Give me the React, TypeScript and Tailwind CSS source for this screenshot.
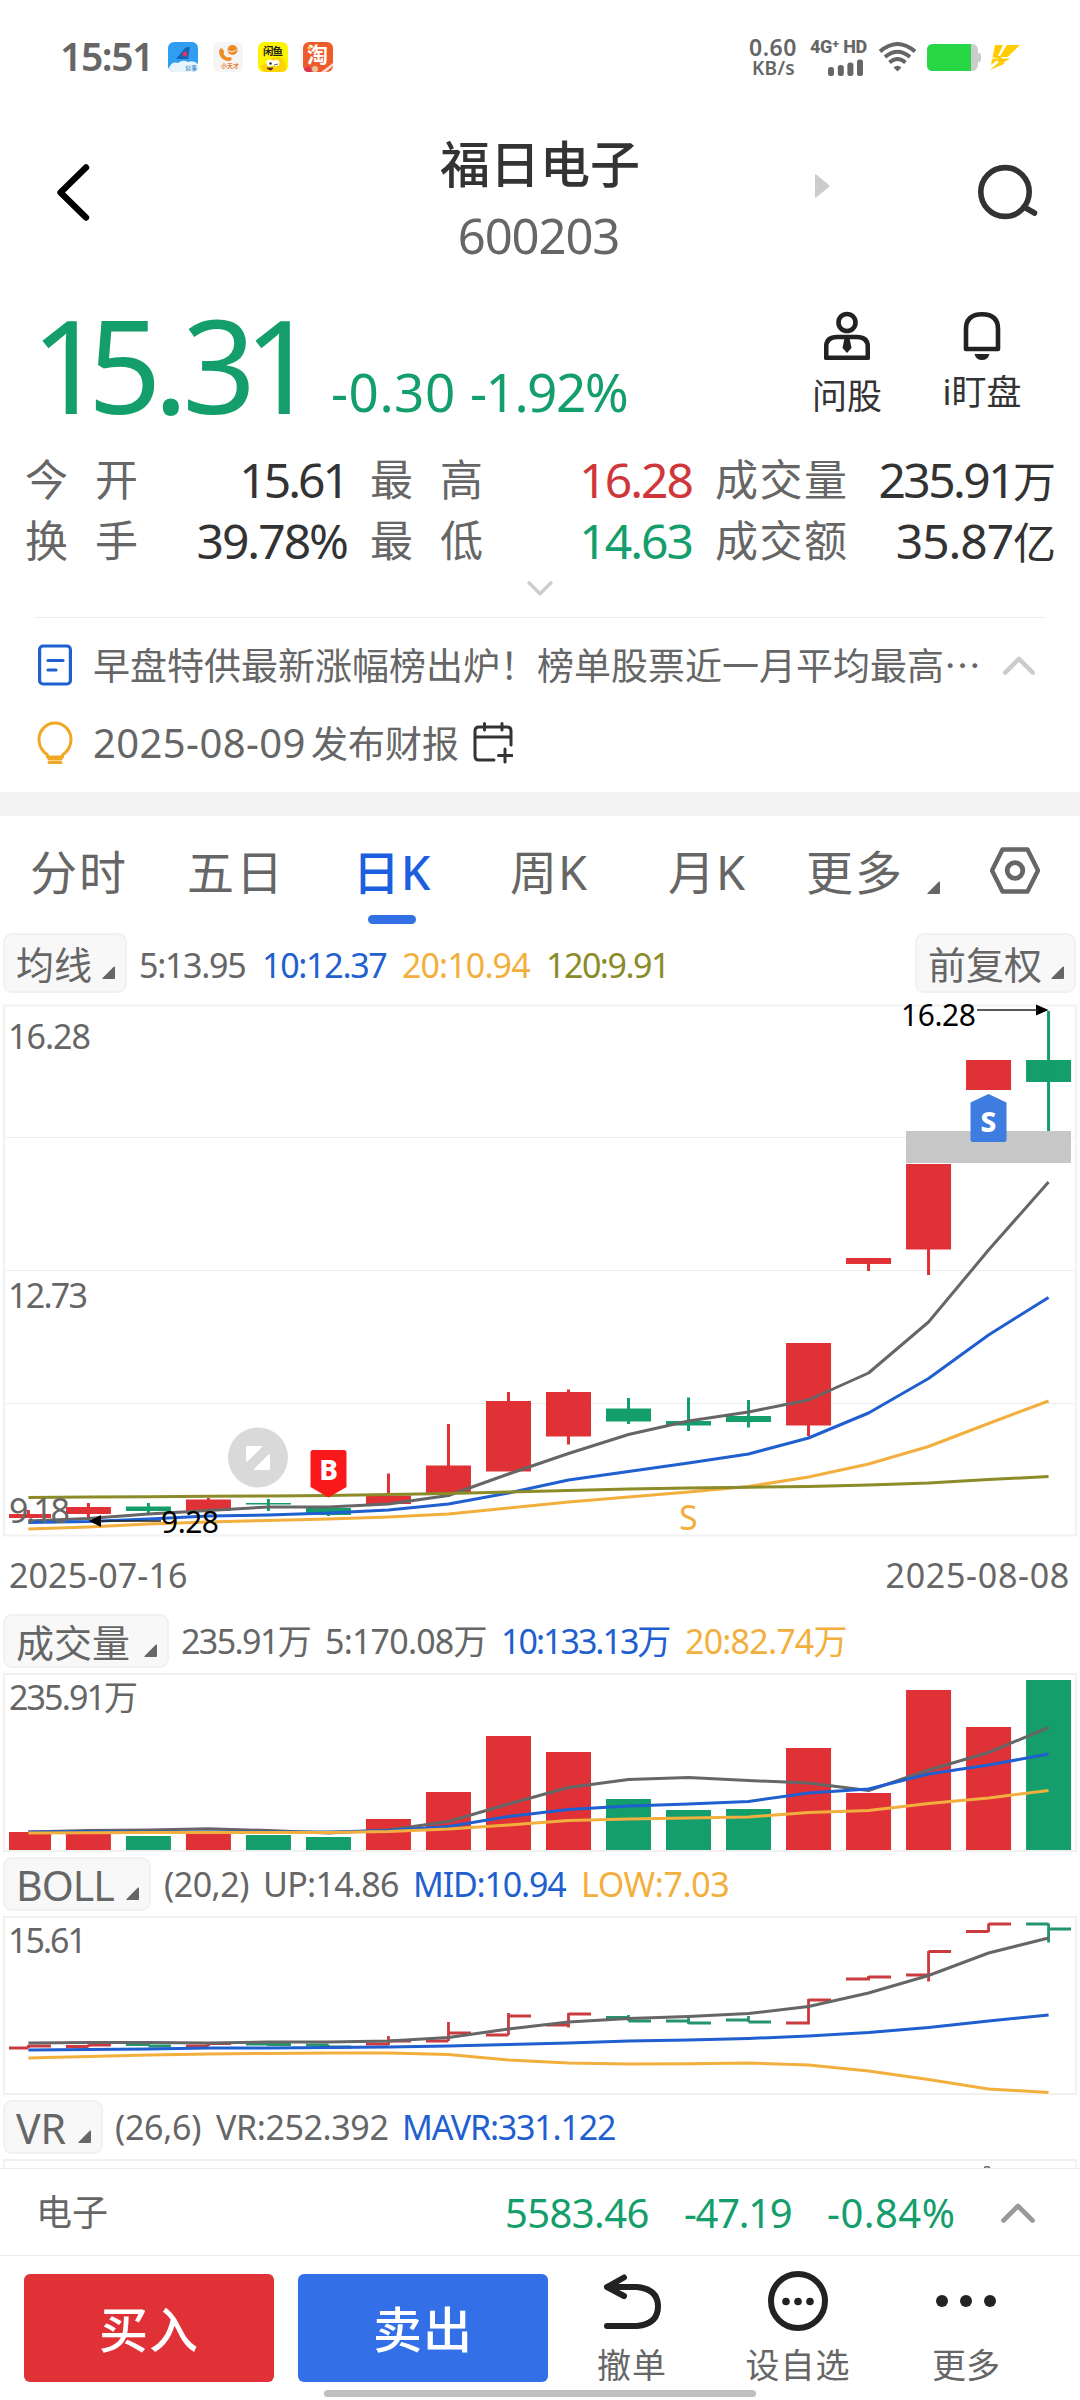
import React from "react";

const RED = "#df3136";
const GREEN = "#139e6b";
const GRAY = "#666666";
const BLUE = "#1f5fd0";
const ORANGE = "#f3af3d";
const OLIVE = "#8b8b2a";

const STEP = 60.01;
const cx = (i: number) => 28.4 + STEP * i;

type Candle = { up: boolean; top: number; bottom: number; high: number; low: number };

const candles: Candle[] = [
  { up: true, top: 1514, bottom: 1518, high: 1510, low: 1518 },
  { up: true, top: 1507, bottom: 1514, high: 1503, low: 1520 },
  { up: false, top: 1506.5, bottom: 1511, high: 1503, low: 1513 },
  { up: true, top: 1499.5, bottom: 1511, high: 1498, low: 1511 },
  { up: false, top: 1503, bottom: 1504.5, high: 1499, low: 1511 },
  { up: false, top: 1508, bottom: 1515, high: 1508, low: 1516 },
  { up: true, top: 1495.5, bottom: 1504, high: 1473.5, low: 1504 },
  { up: true, top: 1465.5, bottom: 1493, high: 1424, low: 1493 },
  { up: true, top: 1401, bottom: 1471.5, high: 1392, low: 1471 },
  { up: true, top: 1392, bottom: 1436.5, high: 1389.5, low: 1444.5 },
  { up: false, top: 1408.5, bottom: 1421.5, high: 1398, low: 1424 },
  { up: false, top: 1421, bottom: 1425.5, high: 1397.5, low: 1431 },
  { up: false, top: 1416, bottom: 1422, high: 1400, low: 1427.5 },
  { up: true, top: 1343, bottom: 1425.5, high: 1343, low: 1436 },
  { up: true, top: 1258, bottom: 1264, high: 1258, low: 1271 },
  { up: true, top: 1164, bottom: 1249.5, high: 1164, low: 1275 },
  { up: true, top: 1060, bottom: 1090, high: 1060, low: 1090 },
  { up: false, top: 1060, bottom: 1082, high: 1011, low: 1131 },
];

const ma5 = [1521, 1518.5, 1514, 1510.5, 1507, 1507, 1504, 1495.5, 1474, 1453.5, 1434.5, 1421, 1412, 1400, 1373, 1322, 1250, 1182];
const ma10 = [1522.5, 1521.5, 1519, 1516, 1515, 1513, 1510, 1504, 1493, 1480, 1471.5, 1463, 1454, 1438, 1413, 1378.5, 1335, 1297.5];
const ma20 = [1529, 1527, 1524, 1522, 1520.5, 1519, 1517, 1514, 1508, 1502, 1497, 1492, 1486.5, 1477, 1464, 1446.5, 1423.5, 1401];
const ma120 = [1497.5, 1497, 1496.8, 1496.3, 1496, 1495.5, 1494.5, 1493.5, 1492, 1490.5, 1489, 1488, 1487.3, 1486.5, 1485, 1483, 1479.5, 1476.5];

const volumes = [1832, 1830, 1836, 1834, 1835, 1837, 1819, 1792, 1736, 1752, 1799, 1810, 1809, 1748, 1793, 1690, 1727, 1680];
const vol5 = [1832, 1830.5, 1830, 1828.7, 1830.5, 1833, 1830, 1821.5, 1804, 1787.5, 1779.5, 1777.5, 1780.5, 1783, 1790.5, 1770, 1752.5, 1727.5];
const vol10 = [1832, 1831.5, 1832, 1832, 1832, 1832, 1830.5, 1826.5, 1816.5, 1809.5, 1806, 1804, 1801.5, 1793, 1789, 1774, 1765, 1754];
const vol20 = [1833, 1832.7, 1832.5, 1832.5, 1832.5, 1832.5, 1831.5, 1829, 1825, 1820.5, 1819, 1818, 1817, 1812.5, 1810.5, 1803.5, 1798, 1790.5];

// open, close, high, low
const bars: number[][] = [
  [2048, 2046, 2045, 2048],
  [2046.5, 2045, 2044.5, 2047],
  [2044.5, 2046, 2044, 2046],
  [2046, 2043.5, 2043, 2046],
  [2044, 2044.5, 2043, 2046],
  [2045, 2047, 2045, 2047],
  [2044, 2041, 2036, 2045],
  [2041, 2033, 2022, 2041],
  [2035, 2016, 2013, 2035],
  [2025, 2014, 2013, 2027.5],
  [2017.5, 2021, 2015, 2021],
  [2021, 2023, 2017, 2024],
  [2020, 2022, 2016, 2022],
  [2023, 2000, 1999, 2024.5],
  [1979, 1977, 1976, 1980.5],
  [1975, 1951.5, 1951, 1981.5],
  [1931.5, 1924, 1923.5, 1932],
  [1924, 1929, 1923.5, 1942.5],
];
const bollUp = [2043, 2042.5, 2042.5, 2043, 2042, 2042, 2041, 2037.5, 2029, 2022, 2018.5, 2016.5, 2013.5, 2006.5, 1993, 1975.5, 1953, 1938];
const bollMid = [2050, 2049.5, 2049, 2048, 2048, 2047.5, 2047, 2046, 2044.5, 2043, 2041, 2040, 2038.5, 2036, 2032.5, 2027.5, 2021, 2015];
const bollLow = [2058, 2056.5, 2055, 2054, 2053.5, 2053, 2053, 2054.5, 2060, 2063, 2064, 2063.7, 2063, 2065, 2071, 2079.5, 2089, 2092.5];

const Curve = ({ ys, color }: { ys: number[]; color: string }) => (
  <polyline
    points={ys.map((y, i) => `${cx(i)},${y}`).join(" ")}
    fill="none"
    stroke={color}
    strokeWidth="3"
    strokeLinejoin="round"
  />
);

const Corner = ({ className = "" }: { className?: string }) => (
  <svg className={`h-[13px] w-[13px] shrink-0 ${className}`} viewBox="0 0 13 13">
    <path d="M12 0.5Q13 0 13 1.5V12Q13 13 12 13H1.2Q-0.4 13 0.6 12Z" fill="#666" />
  </svg>
);

const Pill = ({ label, className = "" }: { label: string; className?: string }) => (
  <div
    className={`flex shrink-0 items-center justify-between rounded-[9px] border-2 border-[#f1f1f1] bg-[#f8f8f8] pl-[11px] pr-[10px] whitespace-nowrap ${className}`}
  >
    <span className="mt-[2px]">{label}</span>
    <Corner className="mt-[19px]" />
  </div>
);

const Chevron = ({ up, color, className = "" }: { up?: boolean; color: string; className?: string }) => (
  <svg className={className} viewBox="0 0 34 20" fill="none" stroke={color} strokeWidth="4.6" strokeLinecap="round" strokeLinejoin="round">
    <path d={up ? "M2.5 17.5L17 3L31.5 17.5" : "M2.5 2.5L17 17L31.5 2.5"} />
  </svg>
);

const StatusBar = () => (
  <div className="flex h-[114px] items-center pl-[60px] text-[#666]">
    <span className="mb-[3px] w-[108px] text-[39px] font-semibold tracking-[-1.400px]">15:51</span>
    <div className="flex gap-[15px]">
      <svg className="h-[30px] w-[30px]" viewBox="0 0 30 30">
        <rect width="30" height="30" rx="6" fill="#2f9df0" />
        <path d="M1 26Q4 19 10 21Q15 17 20 20Q26 18 30 22V25Q29 30 24 30H6Q1 30 1 26Z" fill="#e8f5fd" />
        <path d="M8 17L17 6Q18 5 22 5L20 17Z" fill="#1565b4" />
        <circle cx="17" cy="12" r="2.4" fill="#e2345c" />
        <text x="17" y="28" fontSize="6" fill="#3d8ec8" fontWeight="700">公事</text>
      </svg>
      <svg className="h-[30px] w-[30px]" viewBox="0 0 30 30">
        <rect width="30" height="30" rx="6" fill="#f5f5f5" />
        <circle cx="19.5" cy="8" r="5" fill="#f08a24" />
        <path d="M14.500 8.500Q19 11.500 23.500 7.500" fill="none" stroke="#f5f5f5" />
        <path d="M7 7Q8 5 10.500 8Q12 10 10.500 11.500Q12 15 15 15.500Q18 14 19 17Q18 19.500 14.500 19Q6 17 6 9Z" fill="#f08a24" />
        <text x="8" y="26" fontSize="6" fill="#e8792a" fontWeight="700">小天才</text>
      </svg>
      <svg className="h-[30px] w-[30px]" viewBox="0 0 30 30">
        <rect width="30" height="30" rx="6" fill="#fdf404" />
        <path d="M2 24L7 22Q11 16 18 15Q27 14 28 24V28Q26 30 24 30H6Z" fill="#fdd303" />
        <circle cx="12" cy="21" r="3.600" fill="#fff" />
        <circle cx="18" cy="21" r="3.300" fill="#fff" />
        <circle cx="12.500" cy="21.500" r="1.300" fill="#333" />
        <path d="M16 23L20 22M9 26Q13 30 15 26Z" fill="#8c1f16" stroke="#333" strokeWidth="0.800" />
        <text x="5" y="13" fontSize="10.500" fill="#222" fontWeight="700" textLength="20">闲鱼</text>
      </svg>
      <svg className="h-[30px] w-[30px] overflow-visible" viewBox="0 0 30 30">
        <rect width="30" height="30" rx="6" fill="#ef5b2c" />
        <text x="4" y="20" fontSize="21" fill="#fff" fontWeight="700">淘</text>
        <circle cx="6" cy="6" r="1.800" fill="#ffc93a" />
        <path d="M1 27L6 24L9 30H5Q2 30 1 27Z" fill="#d8325a" />
        <circle cx="12" cy="27" r="3" fill="#e9c3a0" />
        <path d="M18 30L30 21V24L23 30Z" fill="#f7d9d2" />
      </svg>
    </div>
    <div className="ml-[416px] flex w-[61px] flex-col items-start font-semibold">
      <span className="text-[23px] tracking-[0.500px]">0.60</span>
      <span className="pl-[3px] text-[19px] tracking-[0.300px]">KB/s</span>
    </div>
    <div className="flex w-[69px] flex-col gap-[3px]">
      <span className="font-['Roboto'] text-[18px] font-extrabold tracking-[-0.3px] whitespace-nowrap">4G⁺ HD</span>
      <svg className="ml-[18px] h-[17px] w-[36px]" viewBox="0 0 36 17" fill="#666">
        <rect x="0" y="8" width="6" height="9" rx="2.500" />
        <rect x="9.800" y="6" width="6" height="11" rx="2.500" />
        <rect x="19.400" y="3.500" width="6" height="13.500" rx="2.500" />
        <rect x="29" y="0.500" width="6" height="16.500" rx="2.500" />
      </svg>
    </div>
    <svg className="h-[30px] w-[37px]" viewBox="0 0 37 30" fill="none" stroke="#666" strokeWidth="3.900">
      <path d="M1 9.500Q18.500 -5.500 36 9.500" />
      <path d="M6 15Q18.500 4.500 31 15" />
      <path d="M10.500 20.500Q18.500 13.500 26.500 20.500" />
      <path d="M14.500 25.500Q18.500 22 22.500 25.500L18.500 29.500Z" fill="#666" stroke="none" />
    </svg>
    <svg className="ml-[11px] h-[27px] w-[54px]" viewBox="0 0 54 27">
      <rect width="51" height="27" rx="6" fill="#ccc" />
      <rect x="49" y="9" width="5" height="9" rx="2.500" fill="#ccc" />
      <path d="M6 0H44V27H6Q0 27 0 21V6Q0 0 6 0Z" fill="#28d745" />
    </svg>
    <svg className="ml-[9px] h-[25px] w-[30px]" viewBox="0 0 30 25" fill="#fc0">
      <path d="M5 0H13L8 11H10L17 0H30L17.500 12H11L12 13.500L20 13.500L13 18L15 18.500L0 25L9 17L7 16.500L9 14L1 20L2 14L9 13L2.500 12.500Z" />
    </svg>
  </div>
);

const Header = () => (
  <div className="flex h-[156px]">
    <div className="w-[400px] pt-[49px] pl-[56px]">
      <svg className="h-[60px] w-[34px]" viewBox="0 0 34 60" fill="none" stroke="#000" strokeWidth="6.400" strokeLinecap="round" strokeLinejoin="round">
        <path d="M30 4.500L4.500 29.500L30 54.500" />
      </svg>
    </div>
    <div className="flex w-[280px] flex-col items-center gap-[22px] pt-[25px]">
      <h1 className="text-[50px] font-medium text-[#333]">福日电子</h1>
      <p className="pr-[3px] text-[49px] tracking-[-1.100px] text-[#666]">600203</p>
    </div>
    <svg className="mt-[60px] ml-[135px] h-[24px] w-[15px]" viewBox="0 0 15 24" fill="#ccc">
      <path d="M0 1.500Q0 -0.500 1.500 0.800L14 11Q15 12 14 13L1.500 23.200Q0 24.500 0 22.500Z" />
    </svg>
    <svg className="mt-[50px] ml-[147px] h-[56px] w-[62px]" viewBox="0 0 62 56" fill="none" stroke="#333" strokeWidth="5.600" strokeLinecap="round">
      <ellipse cx="28" cy="28" rx="24.200" ry="24.400" />
      <path d="M47 43L57.500 49" />
    </svg>
  </div>
);

const Price = () => (
  <div className="flex h-[179px] items-start text-[#139e6b]">
    <span className="mt-[30px] ml-[31px] w-[300px] text-[129px] whitespace-nowrap">
      <span className="tracking-[-17px]">1</span>
      <span className="tracking-[-8px]">5</span>
      <span className="tracking-[-6px]">.</span>
      <span className="tracking-[-12px]">3</span>
      <span>1</span>
    </span>
    <span className="mt-[95px] w-[139px] text-[53px] tracking-[0.500px]">-0.30</span>
    <span className="mt-[95px] w-[335px] text-[53px] tracking-[-1.500px]">-1.92%</span>
    <div className="mt-[40px] flex w-[84px] flex-col items-center gap-[18px] text-[#333]">
      <svg className="h-[50px] w-[46px]" viewBox="0 0 46 50" fill="none" stroke="#222" strokeWidth="4.600">
        <circle cx="23" cy="12.500" r="8.500" />
        <path d="M2.200 47.800V37Q2.200 27 13 27H33Q43.800 27 43.800 37V47.800Z" strokeLinejoin="round" />
        <path d="M20.500 28H25.500L27.500 38L23 43L18.500 38Z" fill="#222" stroke="none" />
      </svg>
      <span className="text-[35px] whitespace-nowrap">问股</span>
    </div>
    <div className="mt-[40px] ml-[51px] flex w-[84px] flex-col items-center gap-[14px] text-[#333]">
      <svg className="h-[50px] w-[38px]" viewBox="0 0 38 50" fill="none" stroke="#222" strokeWidth="4.600" strokeLinejoin="round">
        <path d="M3 39V19Q3 4.200 19 4.200T35 19V39Z" />
        <path d="M11.500 44H26.500Q25 50 19 50T11.500 44Z" fill="#222" stroke="none" />
      </svg>
      <span className="text-[35px] whitespace-nowrap">i盯盘</span>
    </div>
  </div>
);

const stats = [
  [
    { label: "今开", value: "15.61", color: "text-[#333]", track: "tracking-[-3px]" },
    { label: "最高", value: "16.28", color: "text-[#cf373b]", track: "tracking-[-2px]" },
    { label: "成交量", value: "235.91", unit: "万", color: "text-[#333]", track: "tracking-[-2.600px]" },
  ],
  [
    { label: "换手", value: "39.78%", color: "text-[#333]", track: "tracking-[-2px]" },
    { label: "最低", value: "14.63", color: "text-[#139e6b]", track: "tracking-[-2px]" },
    { label: "成交额", value: "35.87", unit: "亿", color: "text-[#333]", track: "tracking-[-1.100px]" },
  ],
];

const Stats = () => (
  <div className="flex flex-col">
    {stats.map((row, r) => (
      <div key={r} className="grid h-[61px] grid-cols-[322px_322px_341px] items-center gap-x-[23px] pl-[25px] text-[43px]">
        {row.map((s) => (
          <div key={s.label} className="flex items-center justify-between whitespace-nowrap">
            <span className={s.label.length === 2 ? "tracking-[27px] text-[#666]" : "tracking-[1.500px] text-[#666]"}>{s.label}</span>
            <span className={s.color}>
              <span className={`text-[48px] ${s.track}`}>{s.value}</span>
              {s.unit}
            </span>
          </div>
        ))}
      </div>
    ))}
  </div>
);

const News = () => (
  <div className="flex flex-col text-[#666]">
    <div className="mx-[35px] h-px bg-[#ececec]" />
    <div className="flex h-[94px] items-center pl-[38px]">
      <svg className="h-[42px] w-[34px]" viewBox="0 0 34 42" fill="none" stroke="#1f5fd0" strokeWidth="3.200" strokeLinecap="round">
        <rect x="1.600" y="2" width="30.800" height="38" rx="3.500" />
        <path d="M10 16.500H25M10 26H18" />
      </svg>
      <span className="ml-[21px] w-[909px] text-[37px] whitespace-nowrap">早盘特供最新涨幅榜出炉！榜单股票近一月平均最高⋯</span>
      <Chevron up color="#ccc" className="h-[19px] w-[34px]" />
    </div>
    <div className="flex h-[62px] items-center pl-[37px]">
      <svg className="h-[44px] w-[36px]" viewBox="0 0 36 44" fill="none" stroke="#f0a724" strokeWidth="3" strokeLinecap="round">
        <path d="M10.500 36V34Q2 28 2 18.500A16 16.500 0 0 1 34 18.500Q34 28 25.500 34V36Z" strokeLinejoin="round" />
        <path d="M12 41.500H24M12 38H24" />
      </svg>
      <span className="ml-[20px] w-[218px] text-[40px] tracking-[0.400px]">2025-08-09</span>
      <span className="text-[37px]">发布财报</span>
      <svg className="ml-[14px] h-[42px] w-[40px]" viewBox="0 0 40 42" fill="none" stroke="#333" strokeWidth="3" strokeLinecap="round">
        <path d="M38 23V9Q38 5 34 5H6Q2 5 2 9V34Q2 38 6 38H21M2 15H38M11.500 1.500V8M29 1.500V8M32 27V40M25.500 33.500H39" />
      </svg>
    </div>
    <div className="mt-[18px] h-[24px] bg-[#f4f4f4]" />
  </div>
);

const tabs = [
  { name: "分时", width: "w-[157px]" },
  { name: "五日", width: "w-[165px]" },
  { name: "日K", width: "w-[158px]" },
  { name: "周K", width: "w-[158px]" },
  { name: "月K", width: "w-[138px]" },
  { name: "更多", width: "w-[121px]" },
];

const Tabs = () => (
  <div className="flex h-[117px] items-start pl-[30px] text-[47px] text-[#666]">
    {tabs.map((tab) => (
      <div key={tab.name} className={`pt-[33px] whitespace-nowrap ${tab.width}`}>
        {tab.name === "日K" ? (
          <div className="flex w-[80px] flex-col items-center font-medium text-[#1b5fdf]">
            <span className="tracking-[1px]">{tab.name}</span>
            <div className="mt-[19px] h-[9px] w-[48px] rounded-full bg-[#3370e5]" />
          </div>
        ) : (
          <span className={tab.name.endsWith("K") ? "tracking-[1px]" : "tracking-[2px]"}>{tab.name}</span>
        )}
      </div>
    ))}
    <Corner className="mt-[65px]" />
    <svg className="mt-[31px] ml-[50px] h-[47px] w-[50px]" viewBox="0 0 50 47" fill="none" stroke="#666" strokeWidth="4.400" strokeLinejoin="round">
      <path d="M12.500 2.500H37.500L48 23.500L37.500 44.500H12.500L2 23.500Z" />
      <circle cx="25" cy="23.500" r="7.800" strokeWidth="4.800" />
    </svg>
  </div>
);

const MainChart = () => (
  <svg className="block h-[534px] w-[1080px] overflow-visible" viewBox="0 1004 1080 534" fill={GRAY}>
    <rect x="4" y="1005.500" width="1072" height="530" fill="none" stroke="#f1f1f1" strokeWidth="2" />
    {[1137.500, 1270.500, 1403.500].map((y) => (
      <path key={y} d={`M6 ${y}H1074`} stroke="#ececec" />
    ))}
    <rect x="906" y="1131" width="165" height="32" fill="#c7c7c7" />
    {candles.map((c, i) => (
      <g key={i} fill={c.up ? RED : GREEN}>
        <rect x={i === 0 ? 9 : cx(i) - 22.500} y={c.top} width={i === 0 ? 42 : 45} height={c.bottom - c.top} />
        <rect x={cx(i) - 1.500} y={c.high} width="3" height={c.low - c.high} />
      </g>
    ))}
    <Curve ys={ma5} color={GRAY} />
    <Curve ys={ma10} color={BLUE} />
    <Curve ys={ma20} color={ORANGE} />
    <Curve ys={ma120} color={OLIVE} />
    <g fontSize="34">
      <text x="8" y="1049" textLength="83">16.28</text>
      <text x="8" y="1308" textLength="80">12.73</text>
      <text x="9" y="1523" textLength="61">9.18</text>
    </g>
    <g fill="#000" fontSize="30">
      <text x="161" y="1533" textLength="58">9.28</text>
      <text x="901" y="1025.500" textLength="75">16.28</text>
      <path d="M89 1521L101 1515V1527ZM1048.500 1010L1036 1004.500V1015.500Z" />
      <path d="M100 1521H161M977 1010H1038" stroke="#222" strokeWidth="1.500" />
    </g>
    <text x="679" y="1530" fontSize="34" fill={ORANGE}>S</text>
    <circle cx="258" cy="1457.500" r="30" fill="#d9d9d9" />
    <path d="M247 1446H261Q263 1446 261.500 1447.500L248 1461Q246 1462.500 246 1460.500V1447Q246 1446 247 1446ZM269 1470H255Q253 1470 254.500 1468.500L268 1455Q270 1453.500 270 1455.500V1469Q270 1470 269 1470Z" fill="#fff" />
    <path d="M313 1450H344Q346.500 1450 346.500 1452.500V1487L328.500 1497.500L310.500 1487V1452.500Q310.500 1450 313 1450Z" fill="#f9191b" />
    <path d="M988.500 1094L1006.500 1102.500V1139.500Q1006.500 1142 1004 1142H973Q970.500 1142 970.500 1139.500V1102.500Z" fill="#3f7ce0" />
    <g fill="#fff" fontSize="28" fontWeight="800" textAnchor="middle">
      <text x="328.500" y="1480">B</text>
      <text x="988.500" y="1132">S</text>
    </g>
  </svg>
);

const VolumeChart = () => (
  <svg className="block h-[189px] w-[1080px]" viewBox="0 1668 1080 189">
    <rect x="4" y="1674" width="1072" height="177" fill="none" stroke="#f1f1f1" strokeWidth="2" />
    {volumes.map((top, i) => (
      <rect
        key={i}
        x={i === 0 ? 9 : cx(i) - 22.500}
        y={top}
        width={i === 0 ? 42 : 45}
        height={1850 - top}
        fill={candles[i].up ? RED : GREEN}
      />
    ))}
    <Curve ys={vol5} color={GRAY} />
    <Curve ys={vol10} color={BLUE} />
    <Curve ys={vol20} color={ORANGE} />
    <text x="9" y="1710" fontSize="34" fill={GRAY} textLength="129">235.91万</text>
  </svg>
);

const BollChart = () => (
  <svg className="block h-[189px] w-[1080px]" viewBox="0 1911 1080 189">
    <rect x="4" y="1917" width="1072" height="177" fill="none" stroke="#f1f1f1" strokeWidth="2" />
    {bars.map(([open, close, high, low], i) => (
      <path
        key={i}
        d={`M${i === 0 ? 9 : cx(i) - 22.500} ${open}H${cx(i)}M${cx(i)} ${close}H${cx(i) + 22.500}M${cx(i)} ${high}V${low}`}
        stroke={candles[i].up ? "#cb3a3e" : "#23946b"}
        strokeWidth="2.800"
      />
    ))}
    <Curve ys={bollUp} color={GRAY} />
    <Curve ys={bollMid} color={BLUE} />
    <Curve ys={bollLow} color={ORANGE} />
    <text x="8" y="1953" fontSize="34" fill={GRAY} textLength="79">15.61</text>
  </svg>
);

const Indicators = () => (
  <div className="text-[34px] whitespace-nowrap text-[#666]">
    <div className="flex h-[60px] items-center pr-[4px] pl-[3px]">
      <Pill label="均线" className="h-[60px] w-[124px] text-[38px]" />
      <div className="mt-[4px] ml-[12px] flex">
        <span className="w-[123px] tracking-[-1.300px]">5:13.95</span>
        <span className="w-[140px] tracking-[-1.300px] text-[#1f5fd0]">10:12.37</span>
        <span className="w-[144px] tracking-[-0.900px] text-[#f3af3d]">20:10.94</span>
        <span className="tracking-[-1.500px] text-[#8b8b2a]">120:9.91</span>
      </div>
      <Pill label="前复权" className="ml-auto h-[60px] w-[161px] text-[38px]" />
    </div>
    <div className="mt-[11px]">
      <MainChart />
    </div>
    <div className="flex h-[74px] items-center justify-between pr-[10px] pl-[9px]">
      <span className="tracking-[0.100px]">2025-07-16</span>
      <span className="tracking-[0.700px]">2025-08-08</span>
    </div>
    <div className="mt-[2px] flex h-[54px] items-center pl-[3px]">
      <Pill label="成交量" className="h-[54px] w-[166px] text-[38px]" />
      <span className="ml-[12px] w-[144px] tracking-[-1.600px]">235.91万</span>
      <span className="w-[176px] tracking-[-0.800px]">5:170.08万</span>
      <span className="w-[184px] tracking-[-2px] text-[#1f5fd0]">10:133.13万</span>
      <span className="tracking-[-0.800px] text-[#f3af3d]">20:82.74万</span>
    </div>
    <VolumeChart />
    <div className="flex h-[54px] items-center pl-[3px]">
      <Pill label="BOLL" className="h-[54px] w-[148px] text-[41px] tracking-[-1px]" />
      <span className="ml-[13px] w-[99px] tracking-[-0.500px]">(20,2)</span>
      <span className="w-[150px] tracking-[-0.700px]">UP:14.86</span>
      <span className="w-[168px] tracking-[-1.200px] text-[#1f5fd0]">MID:10.94</span>
      <span className="tracking-[-0.400px] text-[#f3af3d]">LOW:7.03</span>
    </div>
    <BollChart />
    <div className="flex h-[54px] items-center pl-[3px]">
      <Pill label="VR" className="h-[54px] w-[100px] text-[41px]" />
      <span className="ml-[12px] w-[101px] tracking-[-0.300px]">(26,6)</span>
      <span className="w-[186px] tracking-[-0.400px]">VR:252.392</span>
      <span className="tracking-[-1.200px] text-[#1f5fd0]">MAVR:331.122</span>
    </div>
    <svg className="block h-[14px] w-[1080px]" viewBox="0 0 1080 14">
      <rect x="4" y="6" width="1072" height="177" fill="none" stroke="#f1f1f1" strokeWidth="2" />
      <path d="M984 13.500Q987 12 990 13.500" stroke="#666" strokeWidth="1.500" fill="none" />
    </svg>
  </div>
);

const Footer = () => (
  <div>
    <div className="flex h-[88px] items-center border-y border-[#ececec] pt-[2px] pl-[36px] text-[40px] whitespace-nowrap text-[#139e6b]">
      <span className="w-[469px] text-[36px] text-[#666]">电子</span>
      <span className="w-[179px] tracking-[-0.600px]">5583.46</span>
      <span className="w-[143px] tracking-[-1.300px]">-47.19</span>
      <span className="w-[174px] tracking-[0.500px]">-0.84%</span>
      <Chevron up color="#999" className="h-[20px] w-[34px]" />
    </div>
    <div className="flex h-[144px] items-start pt-[18px] pl-[24px]">
      <button className="h-[108px] w-[250px] rounded-[6px] bg-[#df3136] pt-[3px] text-[49px] font-medium tracking-[1px] text-white">买入</button>
      <button className="ml-[24px] h-[108px] w-[250px] rounded-[6px] bg-[#336fe6] pt-[3px] text-[49px] font-medium tracking-[1px] text-white">卖出</button>
      <div className="ml-[24px] flex w-[120px] flex-col items-center gap-[18px] text-[34px] tracking-[1px] text-[#666]">
        <svg className="h-[56px] w-[60px]" viewBox="0 0 60 56" fill="none" stroke="#222" strokeWidth="6" strokeLinecap="round" strokeLinejoin="round">
          <path d="M22 3.500L5 13L22 22M5 13H35Q56 15 56 32.500T35 52H5" />
        </svg>
        <span>撤单</span>
      </div>
      <div className="ml-[46px] flex w-[120px] flex-col items-center gap-[18px] text-[34px] tracking-[1px] text-[#666]">
        <svg className="h-[56px] w-[60px]" viewBox="0 0 60 56" fill="#222" overflow="visible">
          <circle cx="30" cy="27" r="27" fill="none" stroke="#222" strokeWidth="6" />
          <circle cx="18" cy="27.500" r="3.800" />
          <circle cx="30" cy="27.500" r="3.800" />
          <circle cx="42" cy="27.500" r="3.800" />
        </svg>
        <span>设自选</span>
      </div>
      <div className="ml-[48px] flex w-[120px] flex-col items-center gap-[18px] text-[34px] text-[#666]">
        <svg className="h-[56px] w-[60px]" viewBox="0 0 60 56" fill="#222">
          <circle cx="6" cy="27" r="6" />
          <circle cx="30" cy="27" r="6" />
          <circle cx="54" cy="27" r="6" />
        </svg>
        <span>更多</span>
      </div>
    </div>
  </div>
);

const App = () => (
  <div className="relative h-[2400px] w-[1080px] overflow-hidden bg-white font-['Noto_Sans','Noto_Sans_CJK_SC',sans-serif] leading-none">
    <StatusBar />
    <Header />
    <Price />
    <Stats />
    <div className="flex h-[46px] justify-center pt-[10px]">
      <Chevron color="#ccc" className="h-[15px] w-[28px]" />
    </div>
    <News />
    <Tabs />
    <Indicators />
    <Footer />
    <div className="absolute bottom-[3px] left-[324px] h-[7px] w-[432px] rounded-full bg-[#c0c0c0]" />
  </div>
);

export default App;
